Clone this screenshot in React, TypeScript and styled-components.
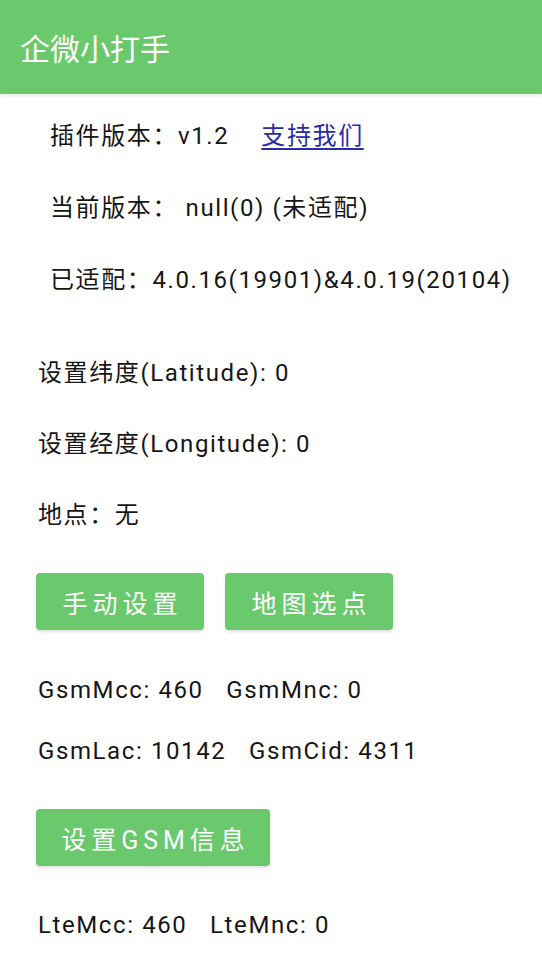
import styled, { createGlobalStyle } from "styled-components";

const GlobalStyle = createGlobalStyle`
  html, body {
    margin: 0;
    padding: 0;
    background: #ffffff;
  }
  body {
    font-family: Roboto, "Noto Sans CJK SC", sans-serif;
    color: #161616;
  }
`;

const Page = styled.div`
  width: 542px;
  min-height: 971px;
  background: #ffffff;
  overflow: hidden;
`;

const TitleBar = styled.header`
  height: 94px;
  background: #6ac96d;
  display: flex;
  align-items: center;
  padding-left: 20px;
  box-shadow: 0 2px 3px rgba(0, 0, 0, 0.08);
  color: #ffffff;
  font-size: 30px;
`;

const Section = styled.section<{ $indent: number; $top: number; $gap: number }>`
  display: flex;
  flex-direction: column;
  align-items: flex-start;
  padding-left: ${(p) => p.$indent}px;
  margin-top: ${(p) => p.$top}px;
  gap: ${(p) => p.$gap}px;
`;

const Line = styled.div`
  font-size: 24px;
  line-height: 32px;
  letter-spacing: 1.6px;
  white-space: pre;
`;

const SupportLink = styled.a`
  color: #2b2ba6;
  text-decoration: underline;
  text-underline-offset: 4px;
  margin-left: 32px;
`;

const ButtonRow = styled.div`
  display: flex;
  gap: 21px;
`;

const GreenButton = styled.button<{ $width: number }>`
  width: ${(p) => p.$width}px;
  height: 57px;
  border: none;
  border-radius: 4px;
  background: #6ac96d;
  color: #ffffff;
  font-family: Roboto, "Noto Sans CJK SC", sans-serif;
  font-size: 25px;
  letter-spacing: 5px;
  text-indent: 5px;
  box-shadow: 0 2px 3px rgba(0, 0, 0, 0.12);
  padding: 0;
`;

export default function App() {
  return (
    <Page>
      <GlobalStyle />
      <TitleBar>企微小打手</TitleBar>

      <Section $indent={50} $top={26} $gap={40}>
        <Line>
          插件版本：v1.2
          <SupportLink href="#">支持我们</SupportLink>
        </Line>
        <Line>当前版本： null(0) (未适配)</Line>
        <Line>已适配：4.0.16(19901)&amp;4.0.19(20104)</Line>
      </Section>

      <Section $indent={38} $top={61} $gap={39}>
        <Line>设置纬度(Latitude): 0</Line>
        <Line>设置经度(Longitude): 0</Line>
        <Line>地点：无</Line>
      </Section>

      <Section $indent={36} $top={42} $gap={0}>
        <ButtonRow>
          <GreenButton $width={168}>手动设置</GreenButton>
          <GreenButton $width={168}>地图选点</GreenButton>
        </ButtonRow>
      </Section>

      <Section $indent={38} $top={44} $gap={29}>
        <Line>GsmMcc: 460   GsmMnc: 0</Line>
        <Line>GsmLac: 10142   GsmCid: 4311</Line>
      </Section>

      <Section $indent={36} $top={42} $gap={0}>
        <GreenButton $width={234}>设置GSM信息</GreenButton>
      </Section>

      <Section $indent={38} $top={43} $gap={0}>
        <Line>LteMcc: 460   LteMnc: 0</Line>
      </Section>
    </Page>
  );
}
